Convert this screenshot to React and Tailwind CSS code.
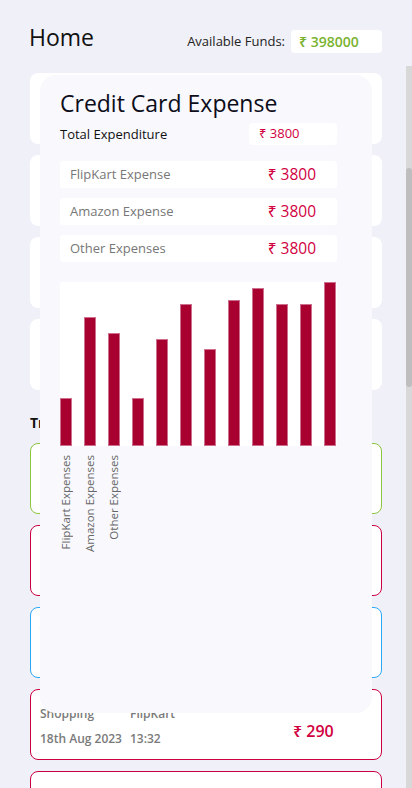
import React from "react";

const bars = [48, 129, 113, 48, 107, 142, 97, 146, 158, 142, 142, 164];
const labels = ["FlipKart Expenses", "Amazon Expenses", "Other Expenses"];

function TxCard({ border, cat, merchant, date, time, amount, amountColor }) {
  return (
    <div className={`h-[71px] rounded-[8px] border bg-white ${border} flex items-start pl-[9px] pt-[16px]`}>
      {cat ? (
        <>
          <div className="w-[253px] grid grid-cols-[90px_1fr] gap-y-[9px] text-[12px] leading-[16px] font-semibold text-[#7a7a7a]">
            <span>{cat}</span>
            <span>{merchant}</span>
            <span>{date}</span>
            <span>{time}</span>
          </div>
          <div className={`mt-[15px] text-[16px] leading-[20px] font-semibold ${amountColor}`}>{amount}</div>
        </>
      ) : null}
    </div>
  );
}

export default function App() {
  return (
    <div className="relative w-[412px] h-[788px] overflow-hidden bg-[#f0f0f8] text-[#111]" style={{ fontFamily: '"Open Sans", "Noto Sans", sans-serif' }}>
      {/* header */}
      <div className="h-[66px] flex items-start justify-between pl-[29px] pr-[30px] pt-[21px]">
        <h1 className="text-[23px] leading-[32px] font-medium text-[#111]">Home</h1>
        <div className="flex items-center gap-[6px] mt-[9px]">
          <span className="text-[13px] text-[#222]">Available Funds:</span>
          <div className="w-[91px] h-[23px] rounded-[4px] bg-white pl-[8px] flex items-center text-[14px] font-semibold text-[#7ab32f]">₹ 398000</div>
        </div>
      </div>

      {/* scroll area */}
      <div className="flex h-[722px]">
        <div className="flex-1 pl-[30px] pr-[24px] pt-[7px] flex flex-col">
          <div className="flex flex-col gap-[11px]">
            <div className="h-[71px] rounded-[8px] bg-white" />
            <div className="h-[71px] rounded-[8px] bg-white" />
            <div className="h-[71px] rounded-[8px] bg-white" />
            <div className="h-[71px] rounded-[8px] bg-white" />
          </div>
          <h2 className="mt-[23px] text-[14px] leading-[20px] font-bold text-[#111]">Transactions</h2>
          <div className="mt-[10px] flex flex-col gap-[11px]">
            <TxCard border="border-[#8cc63f]" cat="Salary" merchant="Company" date="1st Aug 2023" time="09:00" amount="₹ 50000" amountColor="text-[#7ab32f]" />
            <TxCard border="border-[#cc0040]" cat="Shopping" merchant="Amazon" date="20th Aug 2023" time="18:10" amount="₹ 1200" amountColor="text-[#d1003f]" />
            <TxCard border="border-[#2aa8f8]" cat="Transfer" merchant="Savings" date="19th Aug 2023" time="11:45" amount="₹ 5000" amountColor="text-[#2aa8f8]" />
            <TxCard border="border-[#cc0040]" cat="Shopping" merchant="FlipKart" date="18th Aug 2023" time="13:32" amount="₹ 290" amountColor="text-[#d1003f]" />
            <TxCard border="border-[#cc0040]" />
          </div>
        </div>
        {/* scrollbar */}
        <div className="w-[6px] bg-[#d8d8d8] flex flex-col">
          <div className="h-[102px]" />
          <div className="h-[219px] bg-[#bebebe] rounded-[3px]" />
        </div>
      </div>

      {/* modal */}
      <div className="absolute left-[40px] top-[75px] w-[332px] h-[638px] rounded-[16px] bg-[#f8f8fd] pl-[20px] pr-[35px] pt-[12px]">
        <h3 className="text-[23px] leading-[32px] font-medium text-[#0d0d1a]">Credit Card Expense</h3>
        <div className="mt-[4px] flex items-center justify-between">
          <span className="text-[13px] text-[#111] translate-y-[1px]">Total Expenditure</span>
          <div className="w-[88px] h-[22px] rounded-[4px] bg-white pl-[10px] flex items-center text-[13px] text-[#d1003f]">₹ 3800</div>
        </div>
        <div className="mt-[16px] flex flex-col gap-[10px]">
          {["FlipKart Expense", "Amazon Expense", "Other Expenses"].map((t) => (
            <div key={t} className="h-[27px] rounded-[3px] bg-white flex items-center justify-between pl-[10px] pr-[21px]">
              <span className="text-[13px] text-[#777]">{t}</span>
              <span className="text-[15.5px] text-[#d1003f]">₹ 3800</span>
            </div>
          ))}
        </div>
        {/* chart */}
        <div className="mt-[20px] h-[164px] bg-white flex items-end gap-[12px]">
          {bars.map((h, i) => (
            <div key={i} className="w-[12px] bg-[#a8002f] border border-[#cf6f8f]" style={{ height: h }} />
          ))}
        </div>
        <div className="mt-[9px] flex items-start gap-[12px]">
          {labels.map((l) => (
            <div key={l} className="w-[12px] flex justify-center">
              <span className="[writing-mode:vertical-rl] rotate-180 text-[11.5px] leading-[12px] text-[#666] whitespace-nowrap">{l}</span>
            </div>
          ))}
        </div>
      </div>
    </div>
  );
}
